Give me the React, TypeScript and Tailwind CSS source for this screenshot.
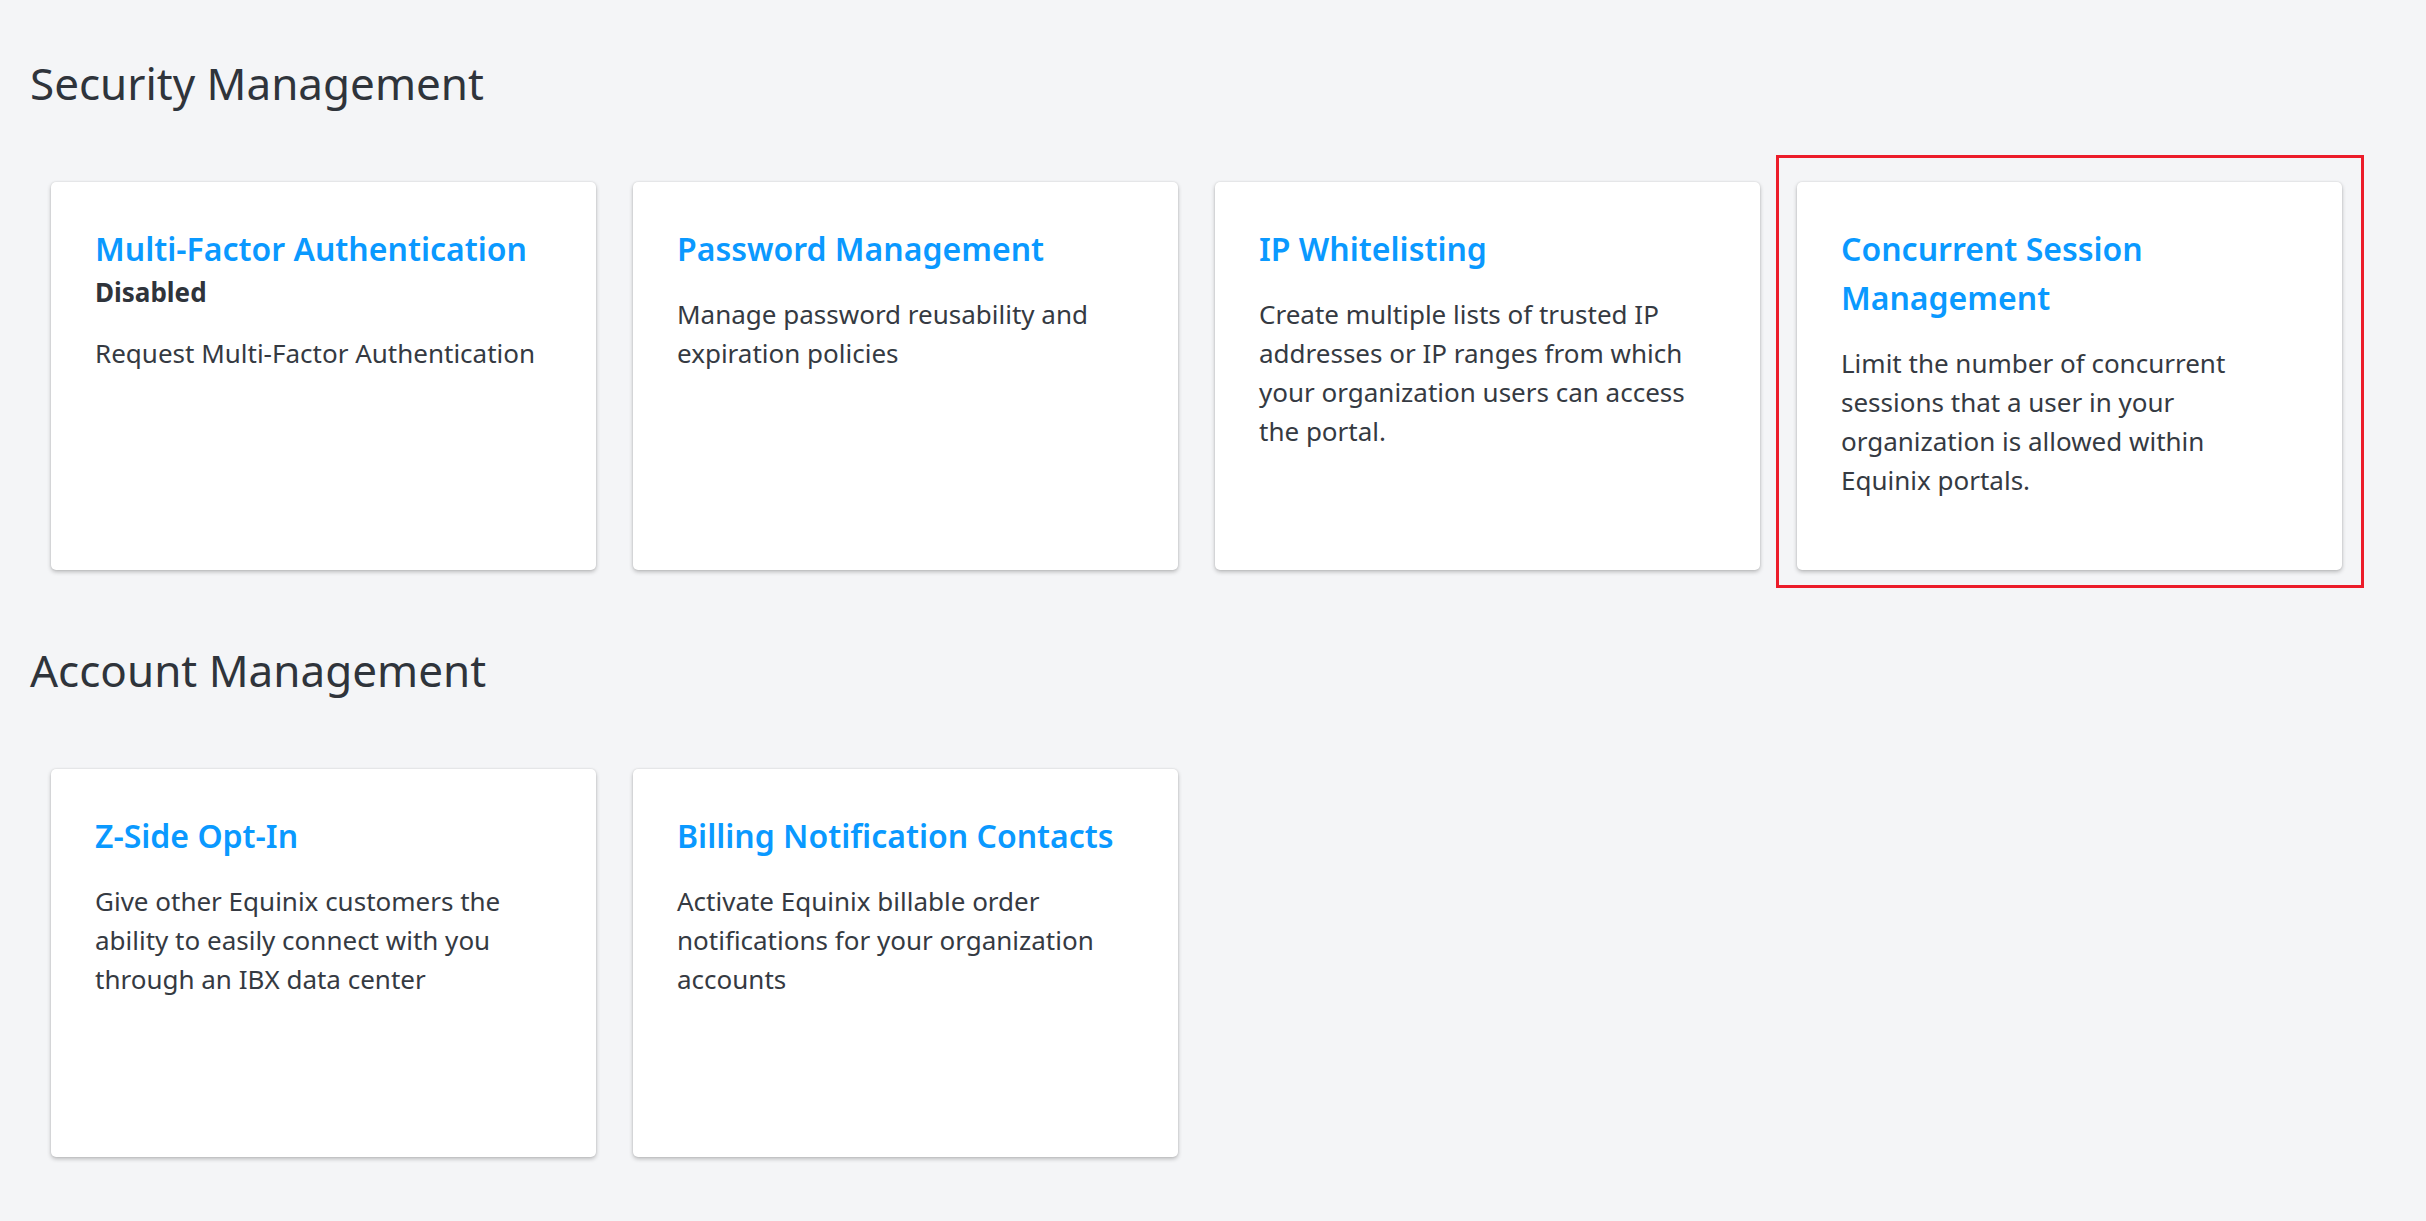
const security = [
  {
    title: "Multi-Factor Authentication",
    status: "Disabled",
    text: "Request Multi-Factor Authentication",
  },
  {
    title: "Password Management",
    text: "Manage password reusability and expiration policies",
  },
  {
    title: "IP Whitelisting",
    text: "Create multiple lists of trusted IP addresses or IP ranges from which your organization users can access the portal.",
  },
  {
    title: "Concurrent Session Management",
    text: "Limit the number of concurrent sessions that a user in your organization is allowed within Equinix portals.",
    highlighted: true,
  },
];

const account = [
  {
    title: "Z-Side Opt-In",
    text: "Give other Equinix customers the ability to easily connect with you through an IBX data center",
  },
  {
    title: "Billing Notification Contacts",
    text: "Activate Equinix billable order notifications for your organization accounts",
  },
];

type Item = {
  title: string;
  text: string;
  status?: string;
  highlighted?: boolean;
};

function Card({ item }: { item: Item }) {
  return (
    <div className="relative">
      {item.highlighted && (
        <div className="absolute -left-[21px] -top-[27px] -right-[22px] -bottom-[18px] border-[3px] border-[#ec1c2a] pointer-events-none" />
      )}
      <div className="h-[388px] bg-white rounded-[5px] pt-[42px] px-[44px] shadow-[0_2px_4px_rgba(0,0,0,0.24),0_0_2px_rgba(0,0,0,0.12)] cursor-pointer">
        <h3 className="text-[32px] leading-[49px] font-semibold text-[#0a99ff]">
          {item.title}
        </h3>
        {item.status && (
          <div className="text-[26px] leading-[39px] font-bold text-[#2f343b]">
            {item.status}
          </div>
        )}
        <p className="mt-[22px] text-[26px] leading-[39px] text-[#353a42]">
          {item.text}
        </p>
      </div>
    </div>
  );
}

function Section({ title, items }: { title: string; items: Item[] }) {
  return (
    <section>
      <h2 className="text-[44px] leading-[60px] text-[#2f343b]">{title}</h2>
      <div className="mt-[69px] mb-[70px] pl-[21px] grid grid-cols-[repeat(4,545px)] gap-x-[37px]">
        {items.map((item) => (
          <Card key={item.title} item={item} />
        ))}
      </div>
    </section>
  );
}

export default function App() {
  return (
    <div
      className="min-h-screen bg-[#f4f5f7] px-[30px] pt-[53px]"
      style={{ fontFamily: '"Noto Sans", "Open Sans", sans-serif' }}
    >
      <Section title="Security Management" items={security} />
      <Section title="Account Management" items={account} />
    </div>
  );
}
